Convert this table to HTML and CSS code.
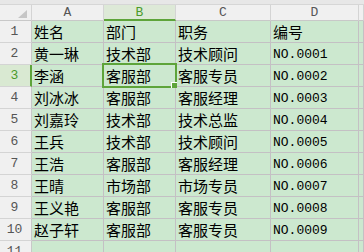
FILE: index.html
```html
<!DOCTYPE html>
<html>
<head>
<meta charset="utf-8">
<link rel="stylesheet" href="styles.css">
</head>
<body>
<div class="sheet">
  <div class="strip"></div>

  <div class="hd corner"><span class="tri"></span></div>
  <div class="hd col">A</div>
  <div class="hd col sel">B</div>
  <div class="hd col">C</div>
  <div class="hd col">D</div>
  <div class="hd col"></div>

  <div class="hd row">1</div>
  <div class="c">姓名</div><div class="c">部门</div><div class="c">职务</div><div class="c">编号</div><div class="c"></div>

  <div class="hd row">2</div>
  <div class="c">黄一琳</div><div class="c">技术部</div><div class="c">技术顾问</div><div class="c no">NO.0001</div><div class="c"></div>

  <div class="hd row sel">3</div>
  <div class="c">李涵</div><div class="c">客服部</div><div class="c">客服专员</div><div class="c no">NO.0002</div><div class="c"></div>

  <div class="hd row">4</div>
  <div class="c">刘冰冰</div><div class="c">客服部</div><div class="c">客服经理</div><div class="c no">NO.0003</div><div class="c"></div>

  <div class="hd row">5</div>
  <div class="c">刘嘉玲</div><div class="c">技术部</div><div class="c">技术总监</div><div class="c no">NO.0004</div><div class="c"></div>

  <div class="hd row">6</div>
  <div class="c">王兵</div><div class="c">技术部</div><div class="c">技术顾问</div><div class="c no">NO.0005</div><div class="c"></div>

  <div class="hd row">7</div>
  <div class="c">王浩</div><div class="c">客服部</div><div class="c">客服经理</div><div class="c no">NO.0006</div><div class="c"></div>

  <div class="hd row">8</div>
  <div class="c">王晴</div><div class="c">市场部</div><div class="c">市场专员</div><div class="c no">NO.0007</div><div class="c"></div>

  <div class="hd row">9</div>
  <div class="c">王义艳</div><div class="c">客服部</div><div class="c">客服专员</div><div class="c no">NO.0008</div><div class="c"></div>

  <div class="hd row">10</div>
  <div class="c">赵子轩</div><div class="c">客服部</div><div class="c">客服专员</div><div class="c no">NO.0009</div><div class="c"></div>

  <div class="hd row">11</div>
  <div class="c"></div><div class="c"></div><div class="c"></div><div class="c"></div><div class="c"></div>

  <div class="selection"><span class="handle"></span></div>
</div>
</body>
</html>
```
FILE: styles.css
```css
html, body {
  margin: 0;
  padding: 0;
  background: #cce8cf;
}
.sheet {
  position: relative;
  width: 364px;
  height: 252px;
  overflow: hidden;
  display: grid;
  grid-template-columns: 32px 72px 72px 95px 88px 1fr;
  grid-template-rows: 5px 16px repeat(11, 22px);
  font-family: "Noto Sans CJK SC", "Liberation Sans", sans-serif;
}
.strip {
  grid-column: 1 / -1;
  background: #e7e7e7;
  border-bottom: 1px solid #d6d6d6;
}
.hd {
  box-sizing: border-box;
  background: #f0f0f0;
  border-right: 1px solid #d4d4d4;
  border-bottom: 1px solid #c8c8c8;
  color: #555;
  font-family: "Liberation Mono", monospace;
  font-size: 13px;
  display: flex;
  align-items: center;
  justify-content: center;
  overflow: hidden;
}
.corner {
  align-items: flex-end;
  justify-content: flex-end;
  padding: 0 4px 2px 0;
}
.tri {
  width: 0;
  height: 0;
  border-left: 9px solid transparent;
  border-bottom: 8px solid #c6c6c6;
}
.hd.col.sel {
  background: #dde9d7;
  color: #4b9a2b;
  border-bottom: 2px solid #5ea43a;
}
.hd.row {
  justify-content: center;
  padding-right: 2px;
  border-bottom-color: #d4d4d4;
  border-right-color: #c8c8c8;
}
.hd.row.sel {
  background: #d9e9d2;
  color: #4b9a2b;
  border-right: 2px solid #5ea43a;
  padding-right: 1px;
}
.c {
  box-sizing: border-box;
  background: #cce8cf;
  border-right: 1px solid #c4c0c4;
  border-bottom: 1px solid #c4c0c4;
  color: #000;
  font-size: 15px;
  line-height: 21px;
  padding-left: 2px;
  white-space: nowrap;
  overflow: hidden;
}
.c.no {
  font-family: "Liberation Mono", monospace;
  font-size: 13px;
  padding-top: 1px;
}
.selection {
  position: absolute;
  left: 102px;
  top: 63px;
  width: 75px;
  height: 25px;
  box-sizing: border-box;
  border: 2px solid #5ea43a;
}
.handle {
  position: absolute;
  right: -2px;
  bottom: -2px;
  width: 6px;
  height: 6px;
  box-sizing: border-box;
  background: #5ea43a;
  border: 1px solid #ffffff;
  border-right: none;
  border-bottom: none;
}
```
